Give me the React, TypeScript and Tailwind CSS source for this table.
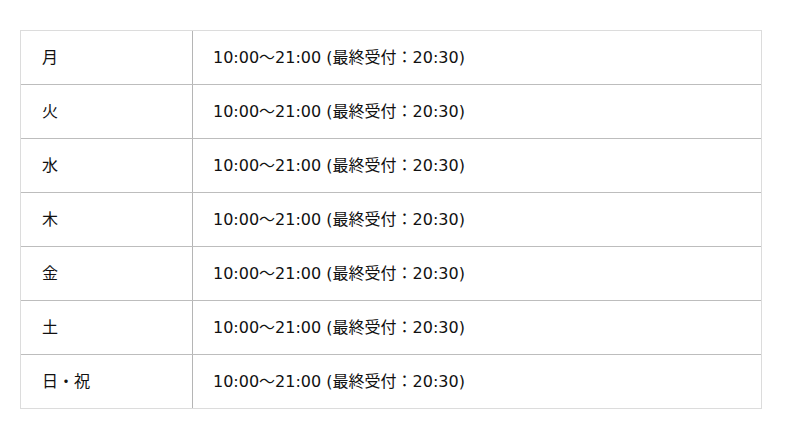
import React from 'react';

const days = ['月', '火', '水', '木', '金', '土', '日・祝'];

export default function App() {
  return (
    <div
      className="min-h-[439px] bg-white pt-[30px] pl-[20px] text-[16px] text-[#111]"
      style={{ fontFamily: '"DejaVu Sans", "Noto Sans CJK JP", sans-serif' }}
    >
      <div className="w-[742px] border border-[#dcdcdc]">
        {days.map((day, i) => (
          <div
            key={day}
            className={`flex items-center ${
              i < days.length - 1 ? 'h-[54px] border-b border-[#bdbdbd]' : 'h-[53px]'
            }`}
          >
            <div className="flex h-full w-[172px] items-center border-r border-[#b5b5b5] pl-[21px]">
              {day}
            </div>
            <div className="pl-[20px]">10:00～21:00 (最終受付：20:30)</div>
          </div>
        ))}
      </div>
    </div>
  );
}
